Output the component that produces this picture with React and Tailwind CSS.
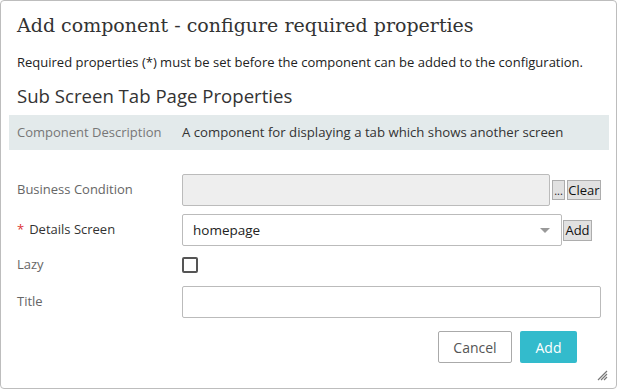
import React from 'react';

const sans = { fontFamily: '"Open Sans", "Noto Sans", sans-serif' };

const Row = ({ label, required, muted, children, className = '' }) => (
  <div className={`flex items-center ${className}`}>
    <div className={`w-[173px] pl-[8px] text-[13px] ${muted ? 'text-[#666]' : 'text-[#333]'}`}>
      {required && <span className="text-[#d33] mr-[5px]">*</span>}
      {label}
    </div>
    {children}
  </div>
);

const ResizeGrip = () => (
  <svg className="absolute right-[8px] bottom-[7px]" width="12" height="12" viewBox="0 0 12 12">
    <path d="M11 2 L2 11 M11 5 L5 11 M11 8 L8 11" stroke="#777" strokeWidth="1.2" />
  </svg>
);

export default function App() {
  return (
    <div className="w-[618px] h-[391px] bg-white" style={sans}>
      <div className="relative w-[617px] h-[389px] border border-[#bdbdbd] rounded-[4px] px-[8px] bg-white">
        <div className="h-[48px] flex items-center pl-[8px]">
          <h1
            className="text-[19px] text-[#333] font-normal"
            style={{ fontFamily: '"DejaVu Serif", "Liberation Serif", serif' }}
          >
            Add component - configure required properties
          </h1>
        </div>
        <div className="h-[28px] flex items-center pl-[8px] text-[13px] text-[#222]">
          Required properties (*) must be set before the component can be added to the configuration.
        </div>
        <div className="h-[38px] flex items-center pl-[8px] text-[18.6px] text-[#333]">
          Sub Screen Tab Page Properties
        </div>
        <div className="h-[35px] w-[600px] bg-[#e3eaeb] flex items-center text-[13px]">
          <div className="w-[173px] pl-[8px] text-[#777]">Component Description</div>
          <div className="text-[13.2px] text-[#333]">A component for displaying a tab which shows another screen</div>
        </div>

        <Row label="Business Condition" muted className="mt-[24px] h-[32px]">
          <div className="w-[368px] h-[32px] bg-[#eeeeee] border border-[#bbb] rounded-[2px]" />
          <button className="ml-[2px] w-[13px] h-[20px] bg-[#e1e1e1] border border-[#adadad] text-[11px] leading-none text-[#222] flex items-end justify-center pb-[3px]">
            ...
          </button>
          <button className="ml-[2px] w-[34px] h-[20px] bg-[#e1e1e1] border border-[#adadad] text-[13px] leading-none text-[#111] flex items-center justify-center">
            Clear
          </button>
        </Row>

        <Row label="Details Screen" required className="mt-[8px] h-[32px]">
          <div className="relative w-[380px] h-[32px] border border-[#bbb] rounded-[2px] flex items-center pl-[10px] text-[13.5px] text-[#222]">
            homepage
            <span className="absolute right-[11px] top-[13px] w-0 h-0 border-l-[5px] border-r-[5px] border-t-[5px] border-l-transparent border-r-transparent border-t-[#999]" />
          </div>
          <button className="ml-[1px] w-[29px] h-[21px] bg-[#e1e1e1] border border-[#adadad] text-[13px] leading-none text-[#111] flex items-center justify-center">
            Add
          </button>
        </Row>

        <Row label="Lazy" muted className="mt-[11px] h-[16px]">
          <div className="w-[16px] h-[16px] border-2 border-[#555] rounded-[2px]" />
        </Row>

        <Row label="Title" muted className="mt-[13px] h-[32px]">
          <div className="w-[419px] h-[32px] border border-[#bbb] rounded-[2px]" />
        </Row>

        <div className="mt-[13px] flex pl-[429px] gap-[8px]">
          <button className="w-[74px] h-[32px] border border-[#aaa] rounded-[2px] text-[14px] text-[#555] bg-white">
            Cancel
          </button>
          <button className="w-[57px] h-[32px] rounded-[2px] text-[14px] text-white bg-[#33bbcc]">
            Add
          </button>
        </div>

        <ResizeGrip />
      </div>
    </div>
  );
}
